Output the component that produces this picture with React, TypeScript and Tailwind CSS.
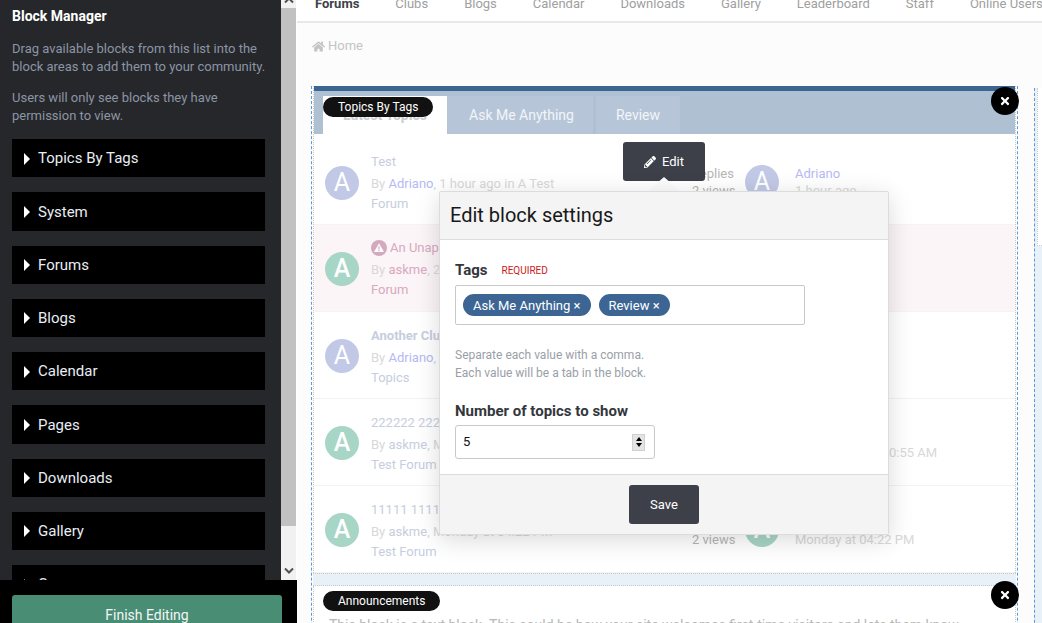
import { FaHome, FaPencilAlt, FaTimes } from "react-icons/fa";

const cats = ["Topics By Tags", "System", "Forums", "Blogs", "Calendar", "Pages", "Downloads", "Gallery", "Commerce"];
const nav = ["Clubs", "Blogs", "Calendar", "Downloads", "Gallery", "Leaderboard", "Staff", "Online Users"];

function Avatar({ green }: { green?: boolean }) {
  return (
    <div className={`w-[34px] h-[34px] rounded-full shrink-0 flex items-center justify-center text-white text-[25px] ${green ? "bg-[#a7d5c6] font-medium" : "bg-[#c1c9e7]"}`}>
      A
    </div>
  );
}

function Row({ green, pink, first, title, bold, by, rest, last, warn }: { green?: boolean; pink?: boolean; first?: boolean; title: string; bold?: boolean; by: string; rest: string; last: string; warn?: boolean }) {
  return (
    <div className={`flex items-center pl-[11px] border-b border-[#f3f3f3] ${first ? "h-[91px] pt-[7px]" : "h-[87px]"} ${pink ? "bg-[#fbf5f7]" : "bg-white"}`}>
      <div className={first ? "" : "mt-[1px]"}>
        <Avatar green={green} />
      </div>
      <div className={`ml-3 w-[195px] text-[13px] leading-[20px] ${first ? "mt-[1px]" : "mt-[4px]"}`}>
        <div className={`whitespace-nowrap flex items-center gap-[3px] ${warn ? "-mt-[2px] mb-[2px]" : ""} ${pink ? "text-[#d9a8c0]" : "text-[#c6cede]"} ${bold ? "font-bold" : ""}`}>
          {warn && (
            <svg width="16" height="16" viewBox="0 0 16 16">
              <circle cx="8" cy="8" r="8" fill="#d3a9be" />
              <path d="M8 3.2 13 12H3Z" fill="#fff" />
              <path d="M7.4 6.2h1.2v3.2H7.4zM7.4 10h1.2v1.2H7.4z" fill="#d3a9be" />
            </svg>
          )}
          {title}
        </div>
        <div className="text-[#d8d8d8] mt-[2px] whitespace-nowrap">
          By <span className={green ? (pink ? "text-[#d9a8c0]" : "text-[#c6cede]") : "text-[#b6b9f5]"}>{by}</span>, {rest}
        </div>
        <div className={pink ? "text-[#d9a8c0]" : "text-[#c6cede]"}>{last}</div>
      </div>
    </div>
  );
}

export default function App() {
  return (
    <div className="relative w-[1042px] h-[623px] overflow-hidden flex bg-[#fcfcfc] text-[13px] font-['Roboto',sans-serif]">
      <aside className="relative w-[297px] shrink-0 h-[623px] overflow-hidden flex bg-white">
        <div className="w-[281px] h-full bg-[#26272a] px-3 pt-[7px]">
          <h2 className="text-[14px] leading-[18px] font-bold text-white">Block Manager</h2>
          <p className="mt-[15px] text-[13px] leading-[18px] text-[#8b95a5]">Drag available blocks from this list into the block areas to add them to your community.</p>
          <p className="mt-[13px] text-[13px] leading-[18px] text-[#8b95a5]">Users will only see blocks they have permission to view.</p>
          <ul className="mt-[14px] w-[253px] flex flex-col gap-[15px]">
            {cats.map((c) => (
              <li key={c} className="h-[38.25px] bg-black flex items-center pl-[12px] pt-[1px] text-[15px] text-[#e8eef5] shrink-0">
                <span className="w-0 h-0 mr-[8px] border-y-[6px] border-y-transparent border-l-[6px] border-l-white" />
                {c}
              </li>
            ))}
          </ul>
        </div>
        <div className="w-[15px] h-full bg-[#f1f1f1] flex flex-col items-center">
          <div className="h-[8px] w-full flex justify-center overflow-hidden">
            <svg className="-mt-[4px]" width="10" height="8" viewBox="0 0 10 8"><path d="M1 6.5 5 2.5 9 6.5" fill="none" stroke="#505050" strokeWidth="2" /></svg>
          </div>
          <div className="w-full h-[518px] bg-[#c1c1c1]" />
          <svg className="mt-[41px]" width="10" height="8" viewBox="0 0 10 8"><path d="M1 1.5 5 5.5 9 1.5" fill="none" stroke="#505050" strokeWidth="2" /></svg>
        </div>
        <div className="absolute left-0 bottom-0 w-[297px] h-[43px] bg-black pl-3 pt-[15px]">
          <div className="w-[270px] h-[40px] rounded-t-[3px] bg-[#498d75] text-[#f2f7f5] text-[14px] text-center pt-[11px] leading-[18px]">Finish Editing</div>
        </div>
      </aside>

      <main className="flex-1 min-w-0 relative">
        <nav className="h-[23px] bg-white border-b-2 border-[#e8e8e8] overflow-hidden pl-[18px]">
          <div className="-mt-[6px] flex gap-9 text-[13px] leading-[20px] text-[#a0a0a0] whitespace-nowrap">
            <span className="font-bold text-[#3d4148]">Forums</span>
            {nav.map((n) => <span key={n}>{n}</span>)}
          </div>
        </nav>
        <div className="pl-[15px] mt-[14px] h-[18px] flex items-center gap-[3px] text-[13px] text-[#c4c4c4]">
          <FaHome className="w-[13px] h-[13px]" /> Home
        </div>

        <div className="ml-[14px] mt-[31px] flex gap-[16px]">
          <div className="w-[707px] shrink-0 border-x border-dashed border-[#5b9bd5] px-[1px] h-[600px]">
            <div className="border-x border-dotted border-[#c8c8c8]">
              <div className="h-[5px] bg-[#3d6594]" />
              <div className="h-[43px] bg-[#aec0d2] pl-[9px] flex items-end gap-[3px] text-[14px]">
                <div className="w-[124px] h-[38px] bg-white text-[#c8ccd2] flex items-center justify-center font-bold">Latest Topics</div>
                <div className="w-[146px] h-[38px] -ml-[3px] pl-[3px] bg-[#b6c6d8] text-[#f2f5f8] flex items-center justify-center">Ask Me Anything</div>
                <div className="w-[84px] h-[38px] bg-[#b6c6d8] text-[#f2f5f8] flex items-center justify-center">Review</div>
              </div>
              <Row first title="Test" by="Adriano" rest="1 hour ago in A Test" last="Forum" />
              <Row pink green warn title="An Unapproved Topic" by="askme" rest="2 hours ago" last="Forum" />
              <Row bold title="Another Club Topic" by="Adriano" rest="Monday" last="Topics" />
              <Row green title="222222 222222" by="askme" rest="Monday" last="Test Forum" />
              <Row green title="11111 11111" by="askme" rest="Monday at 04:22 PM" last="Test Forum" />
            </div>
            <div className="h-[13px] bg-[#e9f1f8] border-y border-dotted border-[#c8c8c8]" />
            <div className="border-x border-dotted border-[#c8c8c8] bg-white pl-[15px] pt-[29px] h-[60px] text-[14px] leading-[20px] text-[#b8b8b8] whitespace-nowrap overflow-hidden">
              This block is a text block. This could be how your site welcomes first-time visitors and lets them know.
            </div>
          </div>
          <div className="flex-1 mt-[2px] h-[600px] border-l border-dashed border-[#5b9bd5] pl-[2px] bg-[#e9f1f8]">
            <div className="h-[158px] bg-white border-l border-b border-dotted border-[#c8c8c8]" />
          </div>
        </div>

        <span className="absolute left-[26px] top-[97px] h-[20px] px-[15px] rounded-full bg-[#111] text-white text-[12px] leading-[20px]">Topics By Tags</span>
        <span className="absolute left-[26px] top-[591px] h-[20px] px-[15px] rounded-full bg-[#111] text-white text-[12px] leading-[20px]">Announcements</span>
        <button className="absolute left-[694px] top-[87px] w-[28px] h-[28px] rounded-full bg-black text-white flex items-center justify-center"><FaTimes className="w-[12px] h-[12px]" /></button>
        <button className="absolute left-[694px] top-[581px] w-[28px] h-[28px] rounded-full bg-black text-white flex items-center justify-center"><FaTimes className="w-[12px] h-[12px]" /></button>

        <div className="absolute left-[388px] top-[164px] text-[13px] leading-[20px] text-[#b5b5b5] whitespace-nowrap">2 replies</div>
        <div className="absolute left-[395px] top-[181px] text-[13px] leading-[20px] text-[#b5b5b5] whitespace-nowrap">2 views</div>
        <div className="absolute left-[448px] top-[165px]"><Avatar /></div>
        <div className="absolute left-[498px] top-[164px] text-[13px] leading-[20px] text-[#b6b9f5]">Adriano</div>
        <div className="absolute left-[498px] top-[181px] text-[13px] leading-[20px] text-[#d8d8d8]">1 hour ago</div>
        <div className="absolute left-[592px] top-[443px] text-[13px] leading-[20px] text-[#d8d8d8]">0:55 AM</div>
        <div className="absolute left-[395px] top-[530px] text-[13px] leading-[20px] text-[#b5b5b5]">2 views</div>
        <div className="absolute left-[448px] top-[513px]"><Avatar green /></div>
        <div className="absolute left-[498px] top-[530px] text-[13px] leading-[20px] text-[#d8d8d8]">Monday at 04:22 PM</div>

        <button className="absolute left-[326px] top-[142px] w-[82px] h-[39px] rounded-[3px] bg-[#3e4049] text-white text-[13px] flex items-center justify-center gap-[6px]">
          <FaPencilAlt className="w-[12px] h-[12px]" /> Edit
        </button>
        <div className="absolute left-[351px] top-[177px] w-0 h-0 border-x-[16px] border-x-transparent border-b-[14px] border-b-[#fbfbfb]" />

        <section className="absolute left-[142px] top-[191px] w-[450px] h-[344px] bg-white border border-[#dcdcdc] rounded-[2px] shadow-[0_5px_25px_rgba(0,0,0,0.15)] flex flex-col text-[#33363c]">
          <header className="h-[48px] bg-[#f4f4f4] border-b border-[#dcdcdc] flex items-center pl-[10px] pb-[1px] text-[20px] text-[#17181a]">Edit block settings</header>
          <div className="flex-1 pl-[15px] pt-[20px]">
            <div className="flex items-center h-[20px]">
              <span className="font-bold text-[15px]">Tags</span>
              <span className="ml-[14px] text-[10px] text-[#cc1a1a] mt-[1px]">REQUIRED</span>
            </div>
            <div className="mt-[5px] w-[350px] h-[40px] border border-[#c9c9c9] rounded-[2px] flex items-center gap-2 pl-[7px]">
              <span className="h-[22px] px-[10px] rounded-full bg-[#3d6594] text-white text-[13px] leading-[24px]">Ask Me Anything ×</span>
              <span className="h-[22px] px-[10px] rounded-full bg-[#3d6594] text-white text-[13px] leading-[24px]">Review ×</span>
            </div>
            <p className="mt-[21px] text-[12px] leading-[18px] text-[#9aa0a8]">Separate each value with a comma.<br />Each value will be a tab in the block.</p>
            <div className="mt-[20px] font-bold text-[15px] leading-[18px]">Number of topics to show</div>
            <div className="mt-[5px] w-[200px] h-[34px] border border-[#c9c9c9] rounded-[3px] flex items-center justify-between pl-[7px] pr-[9px] text-[13px] text-[#111]">
              5
              <div className="w-[13px] h-[17px] bg-[#e4e4e4] border border-[#d0d0d0] flex flex-col items-center justify-center gap-[2px]">
                <span className="w-0 h-0 border-x-[3px] border-x-transparent border-b-[4px] border-b-black" />
                <span className="w-0 h-0 border-x-[3px] border-x-transparent border-t-[4px] border-t-black" />
              </div>
            </div>
          </div>
          <footer className="h-[60px] bg-[#f4f4f4] border-t border-[#dcdcdc] flex items-center justify-center">
            <button className="w-[70px] h-[39px] rounded-[3px] bg-[#3e4049] text-white text-[13px]">Save</button>
          </footer>
        </section>
      </main>
    </div>
  );
}
